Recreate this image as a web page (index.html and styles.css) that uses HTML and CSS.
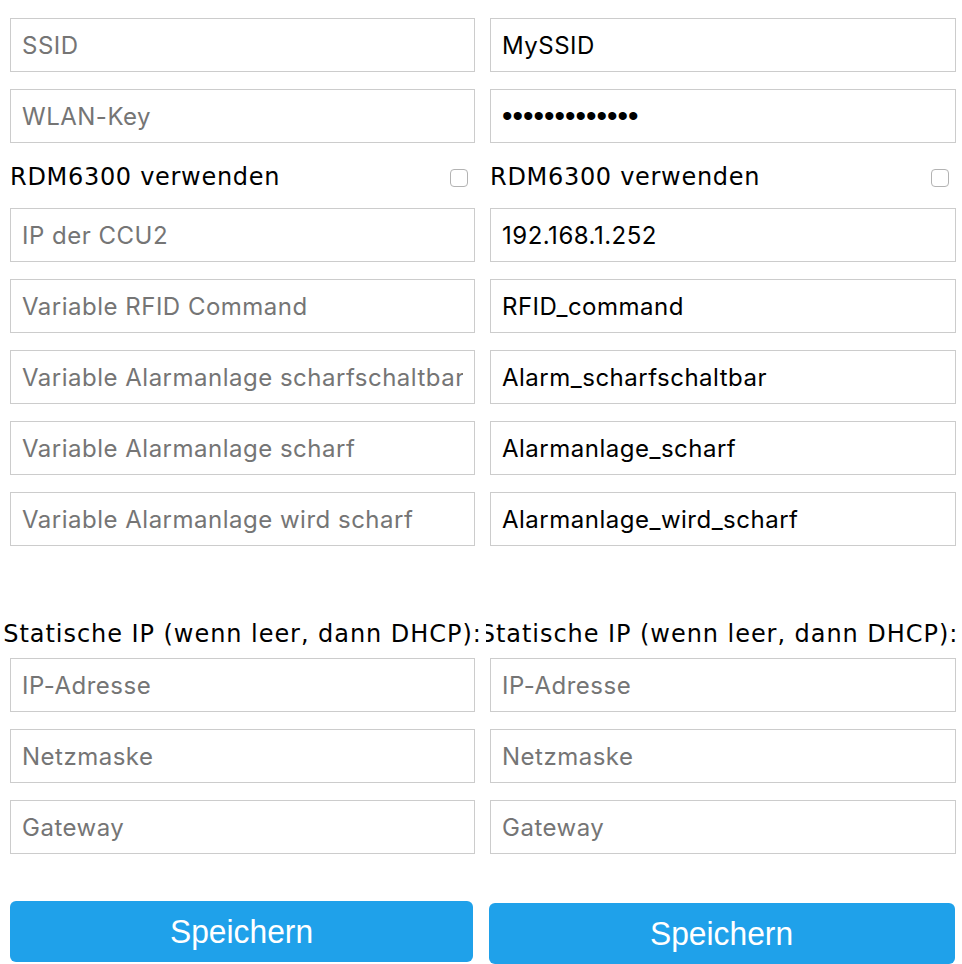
FILE: index.html
```html
<!DOCTYPE html>
<html lang="de">
<head>
<meta charset="utf-8">
<title>WLAN-Einstellungen</title>
<link rel="stylesheet" href="styles.css">
</head>
<body>
<div class="page">
  <form class="col col-left">
    <input class="field" type="text" placeholder="SSID">
    <input class="field" type="password" placeholder="WLAN-Key">
    <label class="check-row"><span>RDM6300 verwenden</span><input class="check" type="checkbox"></label>
    <input class="field" type="text" placeholder="IP der CCU2">
    <input class="field" type="text" placeholder="Variable RFID Command">
    <input class="field" type="text" placeholder="Variable Alarmanlage scharfschaltbar">
    <input class="field" type="text" placeholder="Variable Alarmanlage scharf">
    <input class="field" type="text" placeholder="Variable Alarmanlage wird scharf">
    <div class="section"><span>Statische IP (wenn leer, dann DHCP):</span></div>
    <input class="field" type="text" placeholder="IP-Adresse">
    <input class="field" type="text" placeholder="Netzmaske">
    <input class="field" type="text" placeholder="Gateway">
    <button class="save" type="button"><span class="save-label">Speichern</span></button>
  </form>
  <form class="col col-right">
    <input class="field" type="text" placeholder="SSID" value="MySSID">
    <input class="field field-pass" type="password" placeholder="WLAN-Key" value="geheimpasswor">
    <label class="check-row"><span>RDM6300 verwenden</span><input class="check" type="checkbox"></label>
    <input class="field" type="text" placeholder="IP der CCU2" value="192.168.1.252">
    <input class="field" type="text" placeholder="Variable RFID Command" value="RFID_command">
    <input class="field" type="text" placeholder="Variable Alarmanlage scharfschaltbar" value="Alarm_scharfschaltbar">
    <input class="field" type="text" placeholder="Variable Alarmanlage scharf" value="Alarmanlage_scharf">
    <input class="field" type="text" placeholder="Variable Alarmanlage wird scharf" value="Alarmanlage_wird_scharf">
    <div class="section"><span>Statische IP (wenn leer, dann DHCP):</span></div>
    <input class="field" type="text" placeholder="IP-Adresse">
    <input class="field" type="text" placeholder="Netzmaske">
    <input class="field" type="text" placeholder="Gateway">
    <button class="save" type="button"><span class="save-label">Speichern</span></button>
  </form>
</div>
</body>
</html>
```

FILE: styles.css
```css
html, body {
  margin: 0;
  padding: 0;
  background: #fff;
}

.page {
  display: flex;
  width: 962px;
  height: 964px;
  overflow: hidden;
}

.col {
  flex: none;
  box-sizing: border-box;
  overflow: hidden;
  margin: 0;
  padding-top: 18px;
}

.col-left {
  width: 486px;
  padding-left: 10px;
}

.col-right {
  width: 476px;
  padding-left: 4px;
}

.field {
  display: block;
  width: 465px;
  height: 54px;
  box-sizing: border-box;
  margin: 0 0 17px;
  padding: 0 11px;
  border: 1px solid #cccccc;
  border-radius: 0;
  background: #fff;
  color: #000;
  font: 24px "Inter", "Liberation Sans", Arial, sans-serif;
  letter-spacing: 0.5px;
  outline: none;
}

.col-right .field {
  width: 466px;
}

.field::placeholder {
  color: #757575;
  opacity: 1;
}

.field-pass {
  font-family: "Liberation Sans", Arial, sans-serif;
  font-size: 30px;
  letter-spacing: 0;
}

.check-row {
  display: flex;
  align-items: center;
  justify-content: space-between;
  width: 465px;
  height: 31px;
  padding-top: 2px;
  margin: 0 0 15px;
  font: 24px/31px "DejaVu Sans", Verdana, sans-serif;
  letter-spacing: 0.7px;
  color: #000;
}

.col-right .check-row {
  width: 466px;
}

.check {
  appearance: none;
  -webkit-appearance: none;
  flex: none;
  width: 18px;
  height: 18px;
  margin: 0 7px 0 0;
  border: 1px solid #b3b3b3;
  border-radius: 4px;
  background: #fff;
  box-sizing: border-box;
}

.section {
  display: flex;
  justify-content: center;
  width: 465px;
  margin: 75px 0 10px;
  white-space: nowrap;
  font: 24px/27px "DejaVu Sans", Verdana, sans-serif;
  letter-spacing: 0.95px;
  color: #000;
}

.col-right .section {
  width: 466px;
  margin-left: -4px;
}

.save {
  display: block;
  width: 463px;
  height: 61px;
  margin: 47px 0 0;
  padding: 0;
  border: none;
  border-radius: 6px;
  background: #1fa1ea;
  color: #fff;
  font: 34px "Liberation Sans", Arial, sans-serif;
}

.save-label {
  display: inline-block;
  transform: scaleX(0.935);
}

.col-right .save {
  width: 466px;
  margin: 49px 0 0 -1px;
}
```
